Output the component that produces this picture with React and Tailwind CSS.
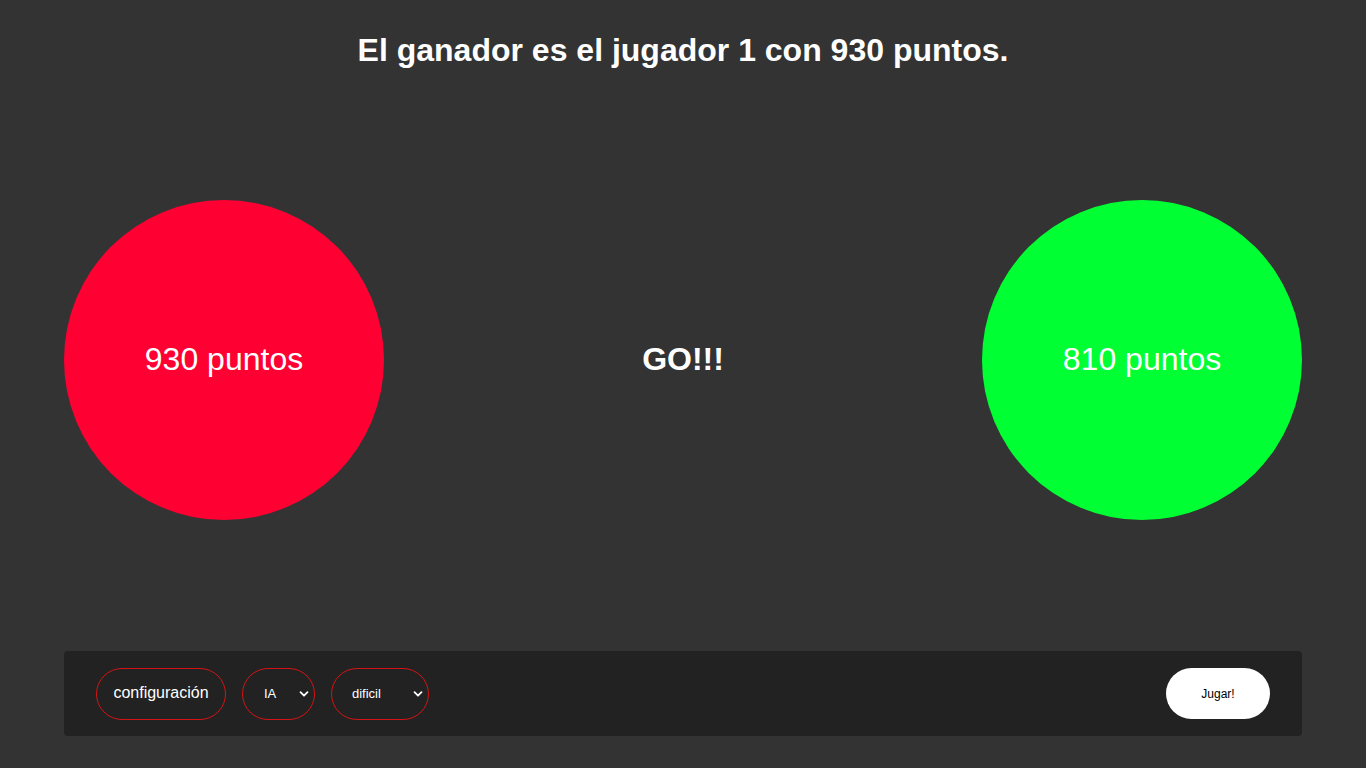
import React, { useState } from 'react';

const Chevron = () => (
  <svg width="10" height="10" viewBox="0 0 10 10" className="pointer-events-none absolute right-[6px] top-1/2 -translate-y-1/2">
    <path d="M1.5 3.2 L5 6.7 L8.5 3.2" fill="none" stroke="white" strokeWidth="1.8" strokeLinecap="round" strokeLinejoin="round" />
  </svg>
);

const App = () => {
  const [modo, setModo] = useState('IA');
  const [nivel, setNivel] = useState('dificil');
  const font = { fontFamily: '"Liberation Sans", Arial, sans-serif' };

  return (
    <div className="w-full h-[768px] bg-[#333333] text-white flex flex-col overflow-hidden" style={font}>
      <div className="h-[100px] flex justify-center pt-[31px]">
        <h1 className="text-[32px] leading-[38px] font-bold">El ganador es el jugador 1 con 930 puntos.</h1>
      </div>

      <div className="flex items-center justify-between px-[64px] pt-[100px]">
        <div className="w-[320px] h-[320px] rounded-full bg-[#ff0033] flex items-center justify-center pb-[3px]">
          <span className="text-[32px] leading-none">930 puntos</span>
        </div>
        <span className="text-[32px] leading-none font-bold pb-[3px]">GO!!!</span>
        <div className="w-[320px] h-[320px] rounded-full bg-[#00ff33] flex items-center justify-center pb-[3px]">
          <span className="text-[32px] leading-none">810 puntos</span>
        </div>
      </div>

      <div className="mx-[64px] mt-[131px] h-[85px] bg-[#222222] rounded-[4px] flex items-center px-[32px]">
        <button className="h-[52px] w-[130px] rounded-full border border-[#d41414] text-[16px] text-white pb-[2px]">configuración</button>
        <div className="relative ml-[16px]">
          <select value={modo} onChange={e => setModo(e.target.value)} className="appearance-none h-[52px] w-[73px] rounded-full border border-[#d41414] bg-transparent text-[13px] text-white pl-[21px] outline-none">
            <option value="IA">IA</option>
            <option value="2J">2J</option>
          </select>
          <Chevron />
        </div>
        <div className="relative ml-[16px]">
          <select value={nivel} onChange={e => setNivel(e.target.value)} className="appearance-none h-[52px] w-[98px] rounded-full border border-[#d41414] bg-transparent text-[13px] text-white pl-[20px] outline-none">
            <option value="facil">facil</option>
            <option value="dificil">dificil</option>
          </select>
          <Chevron />
        </div>
        <button className="ml-auto h-[51px] w-[104px] rounded-full bg-white text-black text-[12px]">Jugar!</button>
      </div>
    </div>
  );
};

export default App;
